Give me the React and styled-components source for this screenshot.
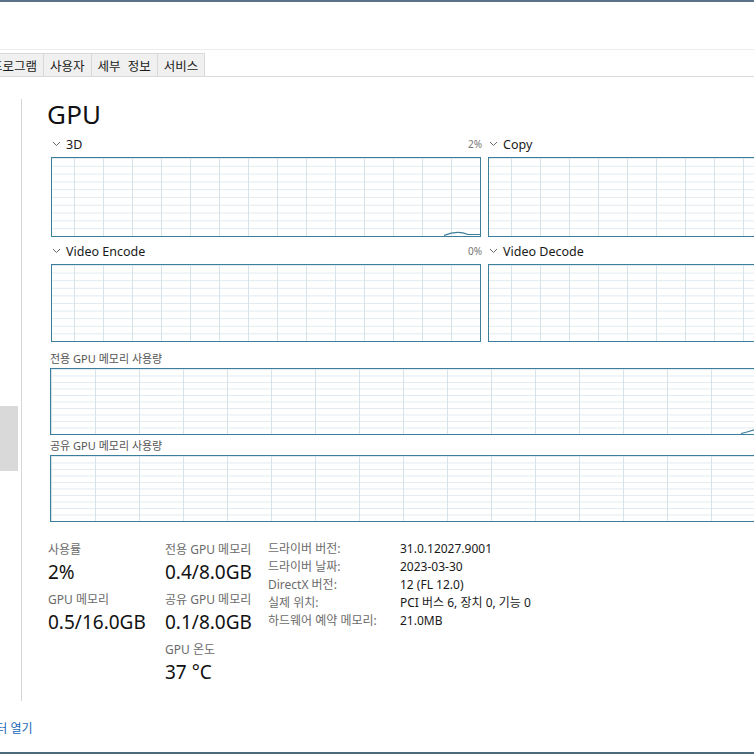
import styled, { createGlobalStyle } from 'styled-components';

const GlobalStyle = createGlobalStyle`
  html, body {
    margin: 0;
    padding: 0;
    background: #fff;
  }
  body {
    font-family: "Noto Sans", "Noto Sans CJK KR", sans-serif;
    color: #1a1a1a;
  }
`;

const Page = styled.div`
  width: 754px;
  height: 754px;
  overflow: hidden;
  display: flex;
  flex-direction: column;
  border-top: 2px solid #5b7187;
  border-bottom: 2px solid #4d6a7a;
  box-sizing: border-box;
  background: #fff;
`;

const TitleArea = styled.div`
  height: 47px;
  border-bottom: 1px solid #ececec;
`;

const TabBar = styled.div`
  display: flex;
  align-items: flex-end;
  height: 26px;
  border-bottom: 1px solid #d9d9d9;
  margin-left: -16px;
`;

const Tab = styled.div`
  height: 22px;
  padding: 0 6px;
  display: flex;
  align-items: center;
  background: #f0f0f0;
  border: 1px solid #d9d9d9;
  border-bottom: none;
  margin-right: -1px;
  font-size: 12.5px;
  word-spacing: 4px;
  color: #1a1a1a;
  white-space: nowrap;
`;

const Body = styled.div`
  display: flex;
  flex: 1;
  min-height: 0;
`;

const Sidebar = styled.div`
  width: 21px;
  flex-shrink: 0;
  margin-top: 22px;
  height: 602px;
  border-right: 1px solid #d6d6d6;
  display: flex;
  flex-direction: column;
`;

const SideSelected = styled.div`
  margin-top: 307px;
  width: 18px;
  height: 65px;
  background: #d9d9d9;
`;

const Content = styled.div`
  flex: 1;
  padding-left: 25px;
  padding-top: 20px;
  display: flex;
  flex-direction: column;
  min-width: 0;
`;

const Heading = styled.div`
  font-size: 26px;
  font-weight: 400;
  line-height: 34px;
  height: 34px;
  color: #111;
  letter-spacing: 0.2px;
`;

const EngineGrid = styled.div`
  display: grid;
  grid-template-columns: 430px 430px;
  column-gap: 7px;
  margin-left: 4px;
  margin-top: 3px;
`;

const EngineBlock = styled.div`
  display: flex;
  flex-direction: column;
`;

const EngineHead = styled.div`
  display: flex;
  align-items: center;
  height: 20px;
  margin-bottom: 3px;
`;

const Chevron = styled.svg`
  width: 9px;
  height: 6px;
  margin: 0 5px 0 1px;
  flex-shrink: 0;
`;

const EngineName = styled.span`
  font-size: 12.5px;
  color: #1a1a1a;
  flex: 1;
`;

const Percent = styled.span`
  font-size: 10px;
  color: #767676;
  margin-right: -1px;
`;

const Graph = styled.div`
  position: relative;
  height: ${p => p.$h}px;
  box-sizing: border-box;
  border: 1px solid #3c7f9c;
  background-color: #fff;
  background-image:
    linear-gradient(to right, #d7e3ea 1px, transparent 1px),
    linear-gradient(to bottom, #e0eaf0 1px, transparent 1px);
  background-size: ${p => p.$col}px 100%, 100% 10%;
  background-position: ${p => p.$off}px 0, 0 0;
  margin-bottom: ${p => p.$mb || 0}px;
`;

const Trace = styled.svg`
  position: absolute;
  right: 0;
  bottom: 0;
`;

const MemLabel = styled.div`
  font-size: 11px;
  color: #555;
  height: 18px;
  line-height: 18px;
`;

const MemBlock = styled.div`
  display: flex;
  flex-direction: column;
  width: 880px;
  margin-left: 3px;
`;

const Stats = styled.div`
  display: flex;
  margin-top: 17px;
  margin-left: 1px;
`;

const StatCol = styled.div`
  width: ${p => p.$w}px;
  display: flex;
  flex-direction: column;
`;

const StatLabel = styled.div`
  font-size: 12px;
  color: #6b6b6b;
  height: 22px;
  line-height: 22px;
  white-space: nowrap;
`;

const StatValue = styled.div`
  font-size: 19px;
  color: #111;
  height: 24px;
  line-height: 22px;
  margin-bottom: 4px;
  white-space: nowrap;
`;

const InfoTable = styled.div`
  display: grid;
  grid-template-columns: 132px auto;
  grid-auto-rows: 18px;
  margin-top: 1px;
  font-size: 12px;
  line-height: 18px;
`;

const InfoKey = styled.div`
  color: #6b6b6b;
  white-space: nowrap;
`;

const InfoVal = styled.div`
  color: #1a1a1a;
  white-space: nowrap;
`;

const Footer = styled.div`
  height: 50px;
  display: flex;
  align-items: center;
`;

const Link = styled.span`
  font-size: 12px;
  color: #1566b8;
  margin-left: -62px;
  margin-top: 2px;
  white-space: nowrap;
`;

const Chev = () => (
  <Chevron viewBox="0 0 9 6">
    <path d="M1 1 L4.5 4.5 L8 1" fill="none" stroke="#666" strokeWidth="1" />
  </Chevron>
);

const engines = [
  { name: '3D', pct: '2%', trace: true },
  { name: 'Copy', pct: '' },
  { name: 'Video Encode', pct: '0%' },
  { name: 'Video Decode', pct: '' },
];

export default function App() {
  return (
    <>
      <GlobalStyle />
      <Page>
        <TitleArea />
        <TabBar>
          <Tab>프로그램</Tab>
          <Tab>사용자</Tab>
          <Tab>세부 정보</Tab>
          <Tab>서비스</Tab>
        </TabBar>
        <Body>
          <Sidebar>
            <SideSelected />
          </Sidebar>
          <Content>
            <Heading>GPU</Heading>
            <EngineGrid>
              {engines.map((e, i) => (
                <EngineBlock key={e.name}>
                  <EngineHead>
                    <Chev />
                    <EngineName>{e.name}</EngineName>
                    <Percent>{e.pct}</Percent>
                  </EngineHead>
                  <Graph $h={i < 2 ? 80 : 78} $col={29} $off={22} $mb={i < 2 ? 4 : 0}>
                    {e.trace && (
                      <Trace width="36" height="8" viewBox="0 0 36 8">
                        <path d="M0 7.5 C8 4, 16 3, 24 6.5 L36 6.5" fill="none" stroke="#3c7f9c" strokeWidth="1.2" />
                      </Trace>
                    )}
                  </Graph>
                </EngineBlock>
              ))}
            </EngineGrid>
            <MemBlock>
              <MemLabel style={{ marginTop: 8 }}>전용 GPU 메모리 사용량</MemLabel>
              <Graph $h={67} $col={44} $off={0}>
                <Trace width="166" height="6" viewBox="0 0 166 6" style={{ right: 'auto', left: 690 }}>
                  <path d="M0 5.5 L6 4 L16 1" fill="none" stroke="#3c7f9c" strokeWidth="1.2" />
                </Trace>
              </Graph>
              <MemLabel style={{ marginTop: 2 }}>공유 GPU 메모리 사용량</MemLabel>
              <Graph $h={67} $col={44} $off={0} />
            </MemBlock>
            <Stats>
              <StatCol $w={117}>
                <StatLabel>사용률</StatLabel>
                <StatValue>2%</StatValue>
                <StatLabel>GPU 메모리</StatLabel>
                <StatValue>0.5/16.0GB</StatValue>
              </StatCol>
              <StatCol $w={103}>
                <StatLabel>전용 GPU 메모리</StatLabel>
                <StatValue>0.4/8.0GB</StatValue>
                <StatLabel>공유 GPU 메모리</StatLabel>
                <StatValue>0.1/8.0GB</StatValue>
                <StatLabel>GPU 온도</StatLabel>
                <StatValue>37 °C</StatValue>
              </StatCol>
              <InfoTable>
                <InfoKey>드라이버 버전:</InfoKey>
                <InfoVal>31.0.12027.9001</InfoVal>
                <InfoKey>드라이버 날짜:</InfoKey>
                <InfoVal>2023-03-30</InfoVal>
                <InfoKey>DirectX 버전:</InfoKey>
                <InfoVal>12 (FL 12.0)</InfoVal>
                <InfoKey>실제 위치:</InfoKey>
                <InfoVal>PCI 버스 6, 장치 0, 기능 0</InfoVal>
                <InfoKey>하드웨어 예약 메모리:</InfoKey>
                <InfoVal>21.0MB</InfoVal>
              </InfoTable>
            </Stats>
          </Content>
        </Body>
        <Footer>
          <Link>리소스 모니터 열기</Link>
        </Footer>
      </Page>
    </>
  );
}
